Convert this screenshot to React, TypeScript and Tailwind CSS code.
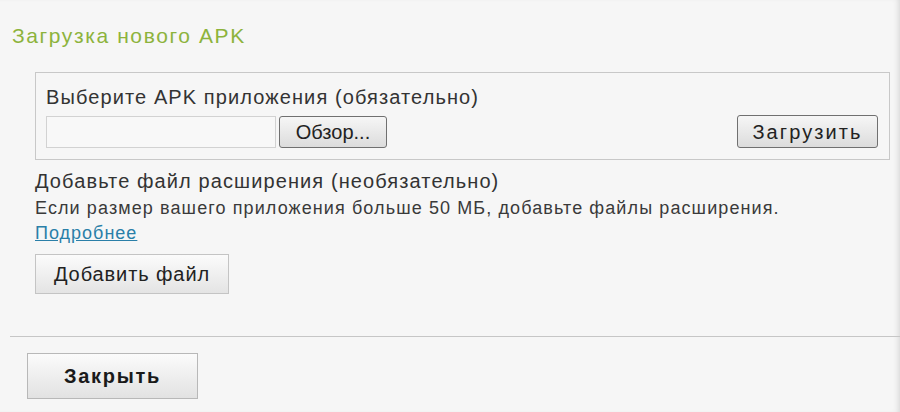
import React from "react";

const font = { fontFamily: '"Liberation Sans", Arial, sans-serif' };

const App = () => {
  return (
    <div
      className="w-[900px] h-[412px] overflow-hidden bg-[#f6f6f6] text-[#333333] pt-[23px] shadow-[inset_-5px_0_6px_-4px_rgba(0,0,0,0.15)]"
      style={font}
    >
      {/* Header */}
      <h2 className="pl-[12px] text-[21px] leading-[26px] tracking-[1.6px] text-[#8db33c]">
        Загрузка нового APK
      </h2>

      {/* Main APK box */}
      <div className="mt-[23px] ml-[35px] mr-[10px] h-[88px] border border-[#c8c8c8] pl-[10px] pr-[11px] pt-[13px]">
        <div className="text-[20px] leading-[22px] tracking-[1.1px]">
          Выберите APK приложения (обязательно)
        </div>
        <div className="mt-[7px] flex items-center">
          <div className="w-[230px] h-[32px] border border-[#d2d2d2] bg-[#f8f8f8]" />
          <button className="ml-[3px] w-[108px] h-[32px] rounded-[3px] border border-[#707070] bg-gradient-to-b from-[#f6f6f6] to-[#dcdcdc] text-[20px] text-[#222]">
            Обзор...
          </button>
          <div className="flex-1" />
          <button className="w-[141px] h-[33px] rounded-[3px] border border-[#707070] bg-gradient-to-b from-[#f6f6f6] to-[#dcdcdc] text-[20px] tracking-[2.1px] text-[#222]">
            Загрузить
          </button>
        </div>
      </div>

      {/* Expansion files */}
      <div className="pl-[35px] pt-[9px]">
        <div className="text-[20px] leading-[24px] tracking-[1.1px]">
          Добавьте файл расширения (необязательно)
        </div>
        <div className="mt-[4px] text-[18px] leading-[22px] tracking-[1.1px] text-[#3a3a3a]">
          Если размер вашего приложения больше 50 МБ, добавьте файлы расширения.
        </div>
        <a
          href="#"
          className="block w-fit mt-[3px] text-[18px] leading-[22px] tracking-[1px] text-[#2a7fa8] underline"
        >
          Подробнее
        </a>
        <button className="mt-[10px] w-[194px] h-[40px] border border-[#c4c4c4] bg-gradient-to-b from-[#fbfbfb] to-[#e4e4e4] text-[20px] tracking-[0.9px] text-[#222]">
          Добавить файл
        </button>
      </div>

      <div className="mt-[42px] ml-[10px] border-t border-[#c6c6c6]" />

      <div className="pl-[27px] pt-[16px]">
        <button className="w-[171px] h-[46px] border border-[#b8b8b8] bg-gradient-to-b from-[#fbfbfb] to-[#e2e2e2] text-[20px] font-bold tracking-[1.7px] text-[#1a1a1a]">
          Закрыть
        </button>
      </div>
    </div>
  );
};

export default App;
